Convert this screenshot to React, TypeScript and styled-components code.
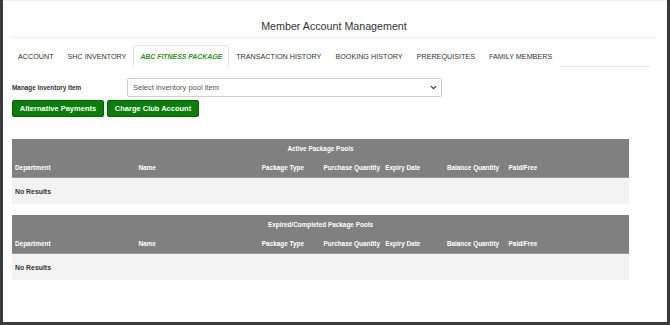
import { FC } from 'react';
import styled, { createGlobalStyle } from 'styled-components';

const GlobalStyle = createGlobalStyle`
  html, body {
    margin: 0;
    padding: 0;
    background: #3a3a3a;
  }
  body {
    font-family: "Liberation Sans", Arial, sans-serif;
    color: #333333;
  }
`;

const Panel = styled.div`
  width: 664px;
  height: 322px;
  margin-left: 3px;
  padding: 0 10px 0 8px;
  box-sizing: border-box;
  background: #ffffff;
  border-top: 1px solid #f0f0f0;
`;

const Header = styled.div`
  display: flex;
  align-items: flex-end;
  justify-content: center;
  height: 37px;
  padding-bottom: 4px;
  box-sizing: border-box;
  border-bottom: 1px solid #ececec;
`;

const Title = styled.h2`
  margin: 0;
  font-size: 10.7px;
  line-height: 13px;
  font-weight: 400;
  color: #333333;
`;

const TabList = styled.ul`
  display: flex;
  list-style: none;
  margin: 7px 7px 0 0;
  padding: 0;
  height: 22px;
  box-sizing: border-box;
  border-bottom: 1px solid #e6e6e6;
`;

const Tab = styled.li<{ $active?: boolean }>`
  display: flex;
  align-items: center;
  height: 22px;
  padding: 0 6px;
  box-sizing: border-box;
  font-size: ${(p) => (p.$active ? '6.9px' : '7.2px')};
  font-weight: ${(p) => (p.$active ? 700 : 400)};
  font-style: ${(p) => (p.$active ? 'italic' : 'normal')};
  color: ${(p) => (p.$active ? '#2f8f22' : '#333333')};
  background: #ffffff;
  border: 1px solid ${(p) => (p.$active ? '#e2e2e2' : 'transparent')};
  border-bottom-color: ${(p) => (p.$active ? '#ffffff' : 'transparent')};
  border-radius: 3px 3px 0 0;
  white-space: nowrap;
`;

const Content = styled.div`
  padding-left: 1px;
`;

const FormRow = styled.div`
  display: flex;
  align-items: center;
  margin-top: 11px;
`;

const Label = styled.label`
  width: 115px;
  font-size: 6.4px;
  font-weight: 700;
  color: #333333;
`;

const SelectBox = styled.div`
  display: flex;
  align-items: center;
  justify-content: space-between;
  width: 315px;
  height: 19px;
  padding: 0 4px 0 5px;
  box-sizing: border-box;
  border: 1px solid #cfcfcf;
  border-radius: 2px;
  font-size: 7.5px;
  color: #555555;
`;

const ButtonRow = styled.div`
  display: flex;
  gap: 3px;
  margin-top: 3px;
`;

const Button = styled.button`
  width: 92px;
  height: 17px;
  padding: 0;
  font-family: "Liberation Sans", Arial, sans-serif;
  font-size: 7.5px;
  font-weight: 700;
  color: #ffffff;
  background: #0a7d0a;
  border: 1px solid #066006;
  border-radius: 2px;
`;

const Tables = styled.div`
  display: flex;
  flex-direction: column;
  gap: 11px;
  margin-top: 22px;
`;

const Table = styled.table`
  width: 617px;
  table-layout: fixed;
  border-collapse: collapse;
`;

const CaptionCell = styled.th`
  height: 19px;
  padding: 0;
  background: #808080;
  color: #ffffff;
  font-size: 6.4px;
  font-weight: 700;
  text-align: center;
`;

const HeadCell = styled.th`
  height: 19px;
  padding: 0 0 0 3px;
  background: #808080;
  color: #ffffff;
  font-size: 6.4px;
  font-weight: 700;
  text-align: left;
  white-space: nowrap;
  border-bottom: 1px solid #9c9c9c;
`;

const EmptyCell = styled.td`
  height: 26px;
  padding: 0 0 0 3px;
  background: #f3f3f3;
  font-size: 6.9px;
  font-weight: 700;
  color: #333333;
`;

const columns = [
  { label: 'Department', width: '20%' },
  { label: 'Name', width: '20%' },
  { label: 'Package Type', width: '10%' },
  { label: 'Purchase Quantity', width: '10%' },
  { label: 'Expiry Date', width: '10%' },
  { label: 'Balance Quantity', width: '10%' },
  { label: 'Paid/Free', width: '20%' },
];

const tabs = [
  'ACCOUNT',
  'SHC INVENTORY',
  'ABC FITNESS PACKAGE',
  'TRANSACTION HISTORY',
  'BOOKING HISTORY',
  'PREREQUISITES',
  'FAMILY MEMBERS',
];

const Chevron = () => (
  <svg width="7" height="5" viewBox="0 0 7 5" fill="none">
    <path d="M1 1.2 L3.5 3.7 L6 1.2" stroke="#333" strokeWidth="1.1" />
  </svg>
);

const PoolTable: FC<{ title: string }> = ({ title }) => (
  <Table>
    <colgroup>
      {columns.map((c) => (
        <col key={c.label} style={{ width: c.width }} />
      ))}
    </colgroup>
    <thead>
      <tr>
        <CaptionCell colSpan={columns.length}>{title}</CaptionCell>
      </tr>
      <tr>
        {columns.map((c) => (
          <HeadCell key={c.label}>{c.label}</HeadCell>
        ))}
      </tr>
    </thead>
    <tbody>
      <tr>
        <EmptyCell colSpan={columns.length}>No Results</EmptyCell>
      </tr>
    </tbody>
  </Table>
);

export default function App() {
  return (
    <>
      <GlobalStyle />
      <Panel>
        <Header>
          <Title>Member Account Management</Title>
        </Header>
        <TabList>
          {tabs.map((t) => (
            <Tab key={t} $active={t === 'ABC FITNESS PACKAGE'}>
              {t}
            </Tab>
          ))}
        </TabList>
        <Content>
          <FormRow>
            <Label>Manage Inventory Item</Label>
            <SelectBox>
              <span>Select inventory pool item</span>
              <Chevron />
            </SelectBox>
          </FormRow>
          <ButtonRow>
            <Button>Alternative Payments</Button>
            <Button>Charge Club Account</Button>
          </ButtonRow>
          <Tables>
            <PoolTable title="Active Package Pools" />
            <PoolTable title="Expired/Completed Package Pools" />
          </Tables>
        </Content>
      </Panel>
    </>
  );
}
